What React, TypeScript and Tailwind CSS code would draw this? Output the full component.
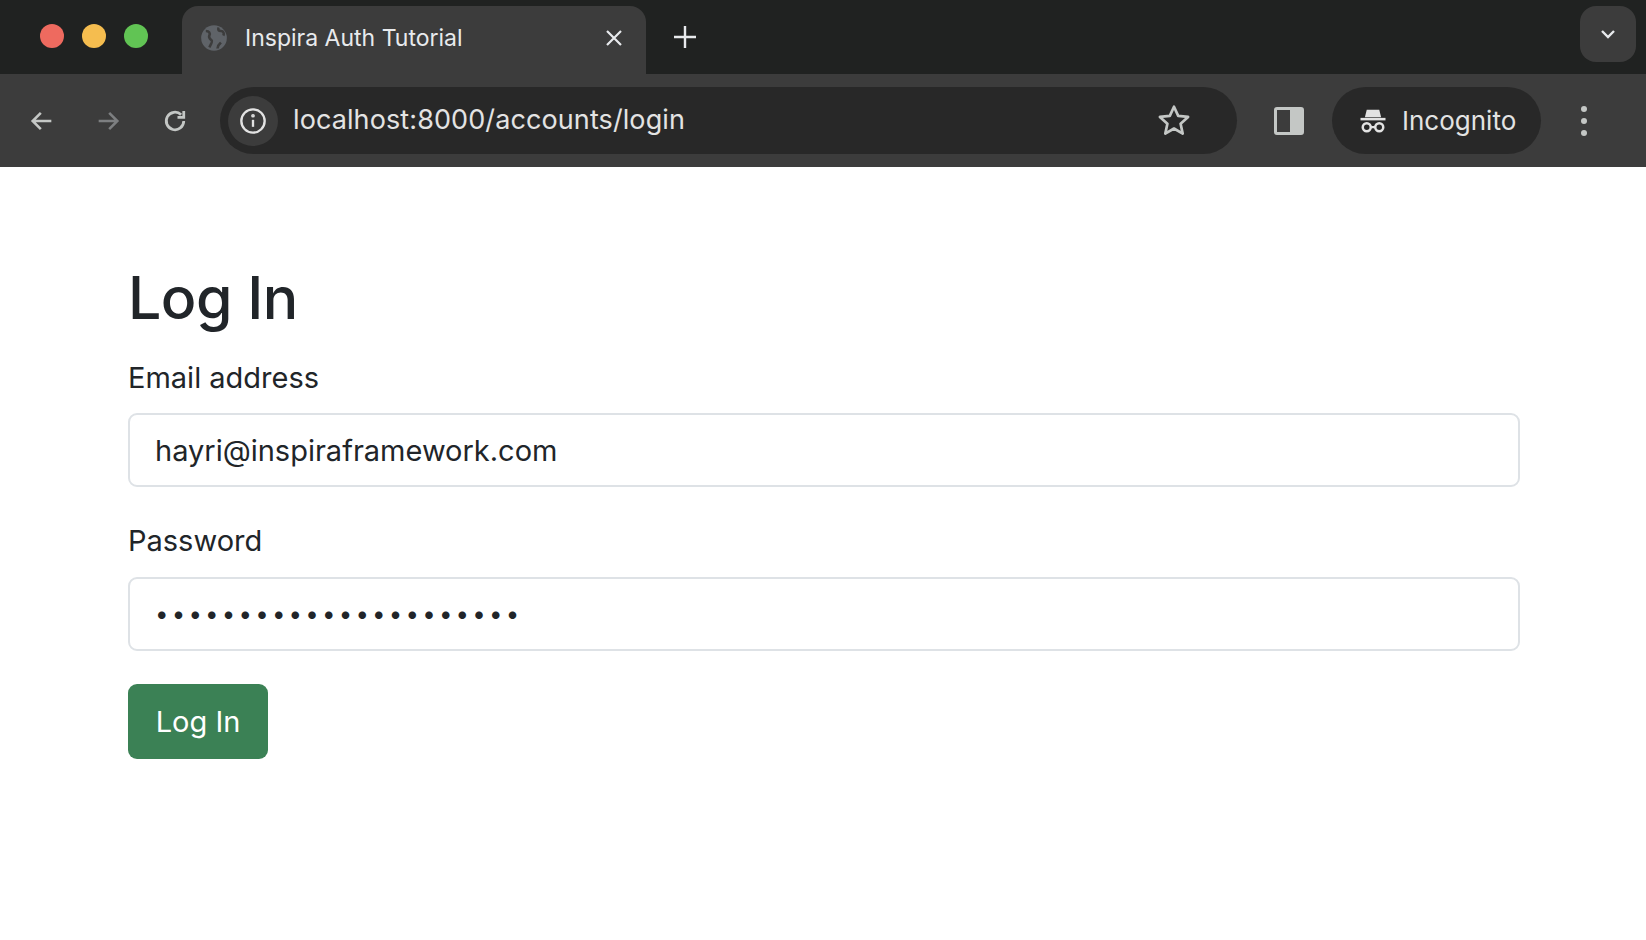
import React from "react";

const F = { fontFamily: "Inter, 'Liberation Sans', sans-serif" };

export default function App() {
  return (
    <div className="w-[1646px] h-[940px] bg-white overflow-hidden" style={F}>
      {/* Tab bar */}
      <div className="h-[74px] bg-[#202221] flex items-end relative">
        <div className="absolute left-[40px] top-[24px] flex gap-[18px]">
          <div className="w-[24px] h-[24px] rounded-full bg-[#ee6a5f]" />
          <div className="w-[24px] h-[24px] rounded-full bg-[#f5bd4f]" />
          <div className="w-[24px] h-[24px] rounded-full bg-[#61c454]" />
        </div>
        <div className="ml-[182px] w-[464px] h-[68px] bg-[#3c3c3c] rounded-t-[16px] flex items-center pl-[18px] pr-[22px] pb-[4px]">
          <svg width="28" height="28" viewBox="0 0 24 24">
            <circle cx="12" cy="12" r="11" fill="#5f6368" />
            <path d="M5 6c3 0 4 2 3 4s1 3 2 4-1 4-2 6M16 3c-1 2 0 3 2 3s3 2 2 4M15 21c0-3 2-4 3-5" stroke="#3c3c3c" strokeWidth="2.2" fill="none" />
          </svg>
          <span className="ml-[17px] text-[23px] text-[#e8eaed] flex-1">Inspira Auth Tutorial</span>
          <svg width="20" height="20" viewBox="0 0 20 20" stroke="#e8eaed" strokeWidth="2.2"><path d="M3 3l14 14M17 3L3 17" /></svg>
        </div>
        <div className="ml-[26px] mb-[24px]">
          <svg width="26" height="26" viewBox="0 0 26 26" stroke="#e8eaed" strokeWidth="2.4"><path d="M13 2v22M2 13h22" /></svg>
        </div>
        <div className="absolute right-[10px] top-[6px] w-[56px] h-[56px] rounded-[16px] bg-[#3c3c3c] flex items-center justify-center">
          <svg width="20" height="20" viewBox="0 0 20 20" fill="none" stroke="#e8eaed" strokeWidth="2.4"><path d="M4 7l6 6 6-6" /></svg>
        </div>
      </div>
      {/* Toolbar */}
      <div className="h-[93px] bg-[#3c3c3c] flex items-center">
        <div className="ml-[28px] flex items-center gap-[38px]">
          <svg width="28" height="28" viewBox="0 0 24 24" fill="none" stroke="#c4c7c5" strokeWidth="2.2"><path d="M20 12H5M11 5l-7 7 7 7" /></svg>
          <svg width="28" height="28" viewBox="0 0 24 24" fill="none" stroke="#7d7f81" strokeWidth="2.2"><path d="M4 12h15M13 5l7 7-7 7" /></svg>
          <svg width="30" height="30" viewBox="0 0 24 24" fill="none" stroke="#c4c7c5" strokeWidth="2.2"><path d="M19 12a7 7 0 1 1-2.1-5" /><path d="M19 4v5h-5" /></svg>
        </div>
        <div className="ml-[30px] w-[1017px] h-[67px] rounded-full bg-[#282828] flex items-center pl-[8px]">
          <div className="w-[50px] h-[50px] rounded-full bg-[#3c3c3c] flex items-center justify-center">
            <svg width="28" height="28" viewBox="0 0 24 24" fill="none" stroke="#e3e3e3" strokeWidth="2"><circle cx="12" cy="12" r="10" /><path d="M12 11v6" /><circle cx="12" cy="7.5" r="0.6" fill="#e3e3e3" /></svg>
          </div>
          <span className="ml-[15px] text-[27px] text-[#e3e3e3] flex-1 tracking-[0.1px]">localhost:8000/accounts/login</span>
          <svg className="mr-[45px]" width="36" height="36" viewBox="0 0 24 24" fill="none" stroke="#c4c7c5" strokeWidth="1.8" strokeLinejoin="round"><path d="M12 2.5l2.8 6.1 6.6.7-5 4.5 1.4 6.6L12 17l-5.8 3.4 1.4-6.6-5-4.5 6.6-.7z" /></svg>
        </div>
        <div className="ml-[37px] w-[30px] h-[28px] border-[3px] border-[#c4c7c5] rounded-[3px] flex justify-end">
          <div className="w-[11px] bg-[#c4c7c5]" />
        </div>
        <div className="ml-[28px] w-[209px] h-[67px] rounded-full bg-[#282828] flex items-center pl-[26px]">
          <svg width="30" height="30" viewBox="0 0 24 24" fill="#e3e3e3">
            <path d="M7 3h10l1.5 6h-13z" />
            <rect x="2" y="9.5" width="20" height="2" />
            <circle cx="7" cy="17" r="3.2" fill="none" stroke="#e3e3e3" strokeWidth="2" />
            <circle cx="17" cy="17" r="3.2" fill="none" stroke="#e3e3e3" strokeWidth="2" />
            <rect x="10" y="16" width="4" height="1.8" />
          </svg>
          <span className="ml-[14px] text-[26px] text-[#e3e3e3]">Incognito</span>
        </div>
        <div className="ml-[40px] flex flex-col gap-[6px]">
          <div className="w-[6px] h-[6px] rounded-full bg-[#c4c7c5]" />
          <div className="w-[6px] h-[6px] rounded-full bg-[#c4c7c5]" />
          <div className="w-[6px] h-[6px] rounded-full bg-[#c4c7c5]" />
        </div>
      </div>
      {/* Content */}
      <div className="pl-[128px] pr-[126px] pt-[96px] text-[#212529]">
        <h1 className="text-[59px] font-medium leading-[1.2] tracking-[-0.5px]">Log In</h1>
        <div className="mt-[22px] text-[29px] leading-[1.5]">Email address</div>
        <div className="mt-[14px] h-[74px] border-2 border-[#dee2e6] rounded-[9px] flex items-center px-[25px] text-[29px]">hayri@inspiraframework.com</div>
        <div className="mt-[32px] text-[29px] leading-[1.5]">Password</div>
        <div className="mt-[14px] h-[74px] border-2 border-[#dee2e6] rounded-[9px] flex items-center px-[25px] text-[24px] tracking-[3.2px]">••••••••••••••••••••••</div>
        <button className="mt-[33px] w-[140px] h-[75px] rounded-[9px] bg-[#3b8155] text-white text-[29px]">Log In</button>
      </div>
    </div>
  );
}
